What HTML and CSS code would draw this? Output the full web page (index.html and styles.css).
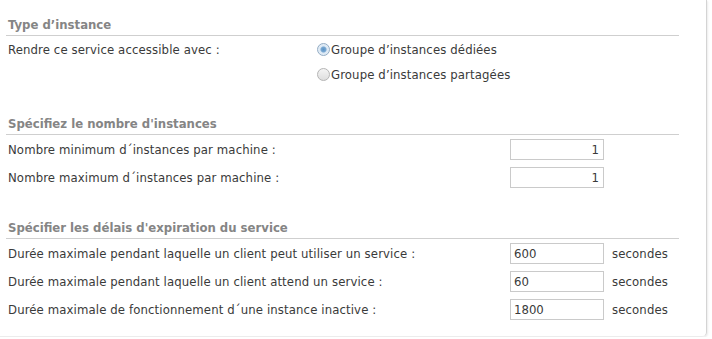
FILE: index.html
```html
<!DOCTYPE html>
<html lang="fr">
<head>
    <meta charset="UTF-8">
    <title>Paramètres du service</title>
    <link rel="stylesheet" href="styles.css">
</head>
<body>
    <div class="panel">

        <!-- Type d'instance -->
        <div class="section section-type">
            <h2 class="section-title">Type d’instance</h2>
            <div class="row row-radio">
                <span class="label">Rendre ce service accessible avec :</span>
                <div class="radio-list">
                    <label class="radio-option">
                        <input type="radio" name="pool" checked>
                        <span>Groupe d’instances dédiées</span>
                    </label>
                    <label class="radio-option">
                        <input type="radio" name="pool">
                        <span>Groupe d’instances partagées</span>
                    </label>
                </div>
            </div>
        </div>

        <!-- Nombre d'instances -->
        <div class="section section-count">
            <h2 class="section-title">Spécifiez le nombre d'instances</h2>
            <div class="row">
                <span class="label">Nombre minimum d´instances par machine :</span>
                <input type="text" class="field field-num" value="1">
            </div>
            <div class="row">
                <span class="label">Nombre maximum d´instances par machine :</span>
                <input type="text" class="field field-num" value="1">
            </div>
        </div>

        <!-- Délais d'expiration -->
        <div class="section">
            <h2 class="section-title">Spécifier les délais d'expiration du service</h2>
            <div class="row">
                <span class="label">Durée maximale pendant laquelle un client peut utiliser un service :</span>
                <input type="text" class="field" value="600">
                <span class="unit">secondes</span>
            </div>
            <div class="row">
                <span class="label">Durée maximale pendant laquelle un client attend un service :</span>
                <input type="text" class="field" value="60">
                <span class="unit">secondes</span>
            </div>
            <div class="row">
                <span class="label">Durée maximale de fonctionnement d´une instance inactive :</span>
                <input type="text" class="field" value="1800">
                <span class="unit">secondes</span>
            </div>
        </div>

    </div>
</body>
</html>
```

FILE: styles.css
```css
body {
    margin: 0;
    background: #fff;
    font-family: 'DejaVu Sans Condensed', 'DejaVu Sans', sans-serif;
    font-size: 13px;
    letter-spacing: 0.12px;
    color: #3a3a3a;
}

/* Panel */
.panel {
    width: 706px;
    height: 322px;
    padding-top: 14px;
    border-right: 1px solid #d4d4d4;
    border-bottom: 1px solid #ececec;
    border-bottom-right-radius: 5px;
    box-shadow: 1px 1px 2px rgba(0, 0, 0, 0.08);
}

/* Sections */
.section {
    margin-bottom: 25px;
}

.section-type {
    margin-bottom: 26px;
}

.section-count {
    margin-bottom: 26px;
}

.section-title {
    margin: 0 0 0 6px;
    width: 671px;
    padding: 0 0 0 2px;
    height: 21px;
    line-height: 21px;
    font-size: 13px;
    font-weight: bold;
    letter-spacing: 0;
    color: #858585;
    border-bottom: 1px solid #cfcfcf;
}

/* Rows */
.row {
    display: flex;
    align-items: center;
    height: 28px;
    padding-left: 8px;
}

.label {
    width: 502px;
    flex-shrink: 0;
}

.row-radio {
    align-items: flex-start;
    height: auto;
    margin-top: 1px;
}

.row-radio .label {
    width: 309px;
    line-height: 25px;
}

/* Radio buttons */
.radio-list {
    display: flex;
    flex-direction: column;
}

.radio-option {
    display: flex;
    align-items: center;
    height: 25px;
}

.radio-option input {
    appearance: none;
    -webkit-appearance: none;
    width: 13px;
    height: 13px;
    margin: 0 1px 0 0;
    border: 1px solid #b4b4b4;
    border-radius: 50%;
    background: linear-gradient(#f4f4f4, #dedede);
    box-sizing: border-box;
}

.radio-option input:checked {
    border-color: #93acc4;
    background: radial-gradient(circle, #5b93c6 0, #79a8d2 2.5px, #dbe8f4 3.5px, #edf3f9 100%);
}

/* Inputs */
.field {
    width: 94px;
    height: 21px;
    box-sizing: border-box;
    margin: 0;
    padding: 0 3px;
    border: 1px solid #cacaca;
    font-family: inherit;
    font-size: 13px;
    color: #3a3a3a;
    outline: none;
}

.field-num {
    text-align: right;
    padding-right: 4px;
}

.unit {
    margin-left: 8px;
}
```
